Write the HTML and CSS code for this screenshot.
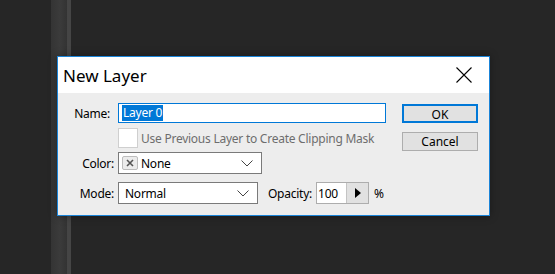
FILE: index.html
```html
<!DOCTYPE html>
<html lang="en">
<head>
    <meta charset="UTF-8">
    <title>New Layer</title>
    <link rel="stylesheet" href="styles.css">
</head>
<body>
    <div class="dialog">
        <div class="titlebar">
            <span class="title">New Layer</span>
            <svg class="close" width="16" height="16" viewBox="0 0 16 16">
                <path d="M0.5 0.5 L15.5 15.5 M15.5 0.5 L0.5 15.5" stroke="#000" stroke-width="1.1" fill="none"/>
            </svg>
        </div>

        <div class="body">
            <div class="form">
                <!-- Name -->
                <div class="row row-name">
                    <label class="label label-name">Name:</label>
                    <div class="text-input"><span class="selected">Layer 0</span></div>
                </div>

                <!-- Clipping mask -->
                <div class="row row-check">
                    <span class="label"></span>
                    <span class="checkbox"></span>
                    <span class="check-text">Use Previous Layer to Create Clipping Mask</span>
                </div>

                <!-- Color -->
                <div class="row row-color">
                    <label class="label">Color:</label>
                    <div class="select select-color">
                        <span class="swatch">
                            <svg width="8" height="8" viewBox="0 0 8 8">
                                <path d="M1 1 L7 7 M7 1 L1 7" stroke="#555" stroke-width="1.6" fill="none"/>
                            </svg>
                        </span>
                        <span class="select-value">None</span>
                        <svg class="chevron" width="12" height="7" viewBox="0 0 12 7">
                            <path d="M0.5 0.5 L6 6 L11.5 0.5" stroke="#444" stroke-width="1" fill="none"/>
                        </svg>
                    </div>
                </div>

                <!-- Mode / Opacity -->
                <div class="row row-mode">
                    <label class="label">Mode:</label>
                    <div class="select select-mode">
                        <span class="select-value">Normal</span>
                        <svg class="chevron" width="12" height="7" viewBox="0 0 12 7">
                            <path d="M0.5 0.5 L6 6 L11.5 0.5" stroke="#444" stroke-width="1" fill="none"/>
                        </svg>
                    </div>
                    <label class="label-opacity">Opacity:</label>
                    <div class="spinner">
                        <span class="spinner-value">100</span>
                        <span class="spinner-btn">
                            <svg width="6" height="10" viewBox="0 0 6 10">
                                <path d="M0 0 L6 5 L0 10 Z" fill="#000"/>
                            </svg>
                        </span>
                    </div>
                    <span class="percent">%</span>
                </div>
            </div>

            <div class="buttons">
                <button class="btn btn-default">OK</button>
                <button class="btn">Cancel</button>
            </div>
        </div>
    </div>
</body>
</html>
```

FILE: styles.css
```css
* {
    box-sizing: border-box;
    margin: 0;
    padding: 0;
}

body {
    font-family: 'Noto Sans', 'Open Sans', sans-serif;
    font-size: 12px;
    color: #000;
    height: 274px;
    overflow: hidden;
    padding-top: 56px;
    /* dark workspace with the panel strip on the left */
    background: linear-gradient(to right,
        #262626 0, #262626 51px,
        #343434 51px, #3b3b3b 60px, #333 67px,
        #454545 67px, #454545 71px,
        #262626 71px);
}

.dialog {
    width: 433px;
    height: 160px;
    margin-left: 57px;
    border: 1px solid #1a84d8;
    background-color: #ededed;
    box-shadow: 0 0 8px rgba(0, 0, 0, 0.35);
}

.titlebar {
    height: 36px;
    background-color: #fff;
    display: flex;
    align-items: center;
    padding: 0 17px 0 5px;
}

.title {
    font-size: 17px;
    flex: 1;
    padding-top: 1px;
}

.close {
    display: block;
}

.body {
    display: flex;
    padding-top: 10px;
    letter-spacing: -0.25px;
}

.form {
    display: flex;
    flex-direction: column;
}

.row {
    display: flex;
    align-items: center;
}

.label {
    width: 56px;
    margin-right: 4px;
    text-align: right;
}

.label-name {
    padding-right: 4px;
}

/* Name */
.row-name {
    height: 20px;
}

.text-input {
    width: 268px;
    height: 20px;
    border: 1px solid #0078d7;
    background-color: #fff;
    padding-left: 3px;
    display: flex;
    align-items: center;
}

.selected {
    background-color: #0078d7;
    color: #fff;
    line-height: 16px;
    padding: 0 1px;
}

/* Clipping mask */
.row-check {
    height: 20px;
    margin-top: 5px;
}

.checkbox {
    width: 20px;
    height: 20px;
    border: 1px solid #cfcfcf;
    background-color: #fff;
}

.check-text {
    margin-left: 3px;
    color: #6d6d6d;
}

/* Selects */
.row-color {
    height: 22px;
    margin-top: 4px;
}

.row-mode {
    height: 22px;
    margin-top: 8px;
}

.select {
    height: 22px;
    border: 1px solid #7a7a7a;
    background-color: #fff;
    display: flex;
    align-items: center;
}

.select-color {
    width: 144px;
    padding-left: 3px;
}

.select-mode {
    width: 140px;
    padding-left: 6px;
}

.select-value {
    flex: 1;
}

.swatch {
    width: 16px;
    height: 14px;
    border: 1px solid #bdbdbd;
    border-radius: 2px;
    background-color: #ececec;
    display: flex;
    align-items: center;
    justify-content: center;
    margin-right: 3px;
}

.swatch svg {
    display: block;
}

.chevron {
    display: block;
    margin-right: 8px;
}

/* Opacity */
.label-opacity {
    margin-left: 10px;
    margin-right: 4px;
}

.spinner {
    display: flex;
    height: 22px;
    border: 1px solid #adadad;
}

.spinner-value {
    width: 29px;
    background-color: #fff;
    display: flex;
    align-items: center;
    padding-left: 1px;
}

.spinner-btn {
    width: 22px;
    border-left: 1px solid #c4c4c4;
    background-color: #e1e1e1;
    display: flex;
    align-items: center;
    justify-content: center;
}

.spinner-btn svg {
    display: block;
}

.percent {
    margin-left: 5px;
}

/* Buttons */
.buttons {
    margin-left: 16px;
    padding-top: 1px;
    display: flex;
    flex-direction: column;
    gap: 9px;
}

.btn {
    width: 76px;
    height: 19px;
    font-family: inherit;
    font-size: 12px;
    color: #000;
    background-color: #e1e1e1;
    border: 1px solid #adadad;
}

.btn-default {
    border: 2px solid #0078d7;
}
```
